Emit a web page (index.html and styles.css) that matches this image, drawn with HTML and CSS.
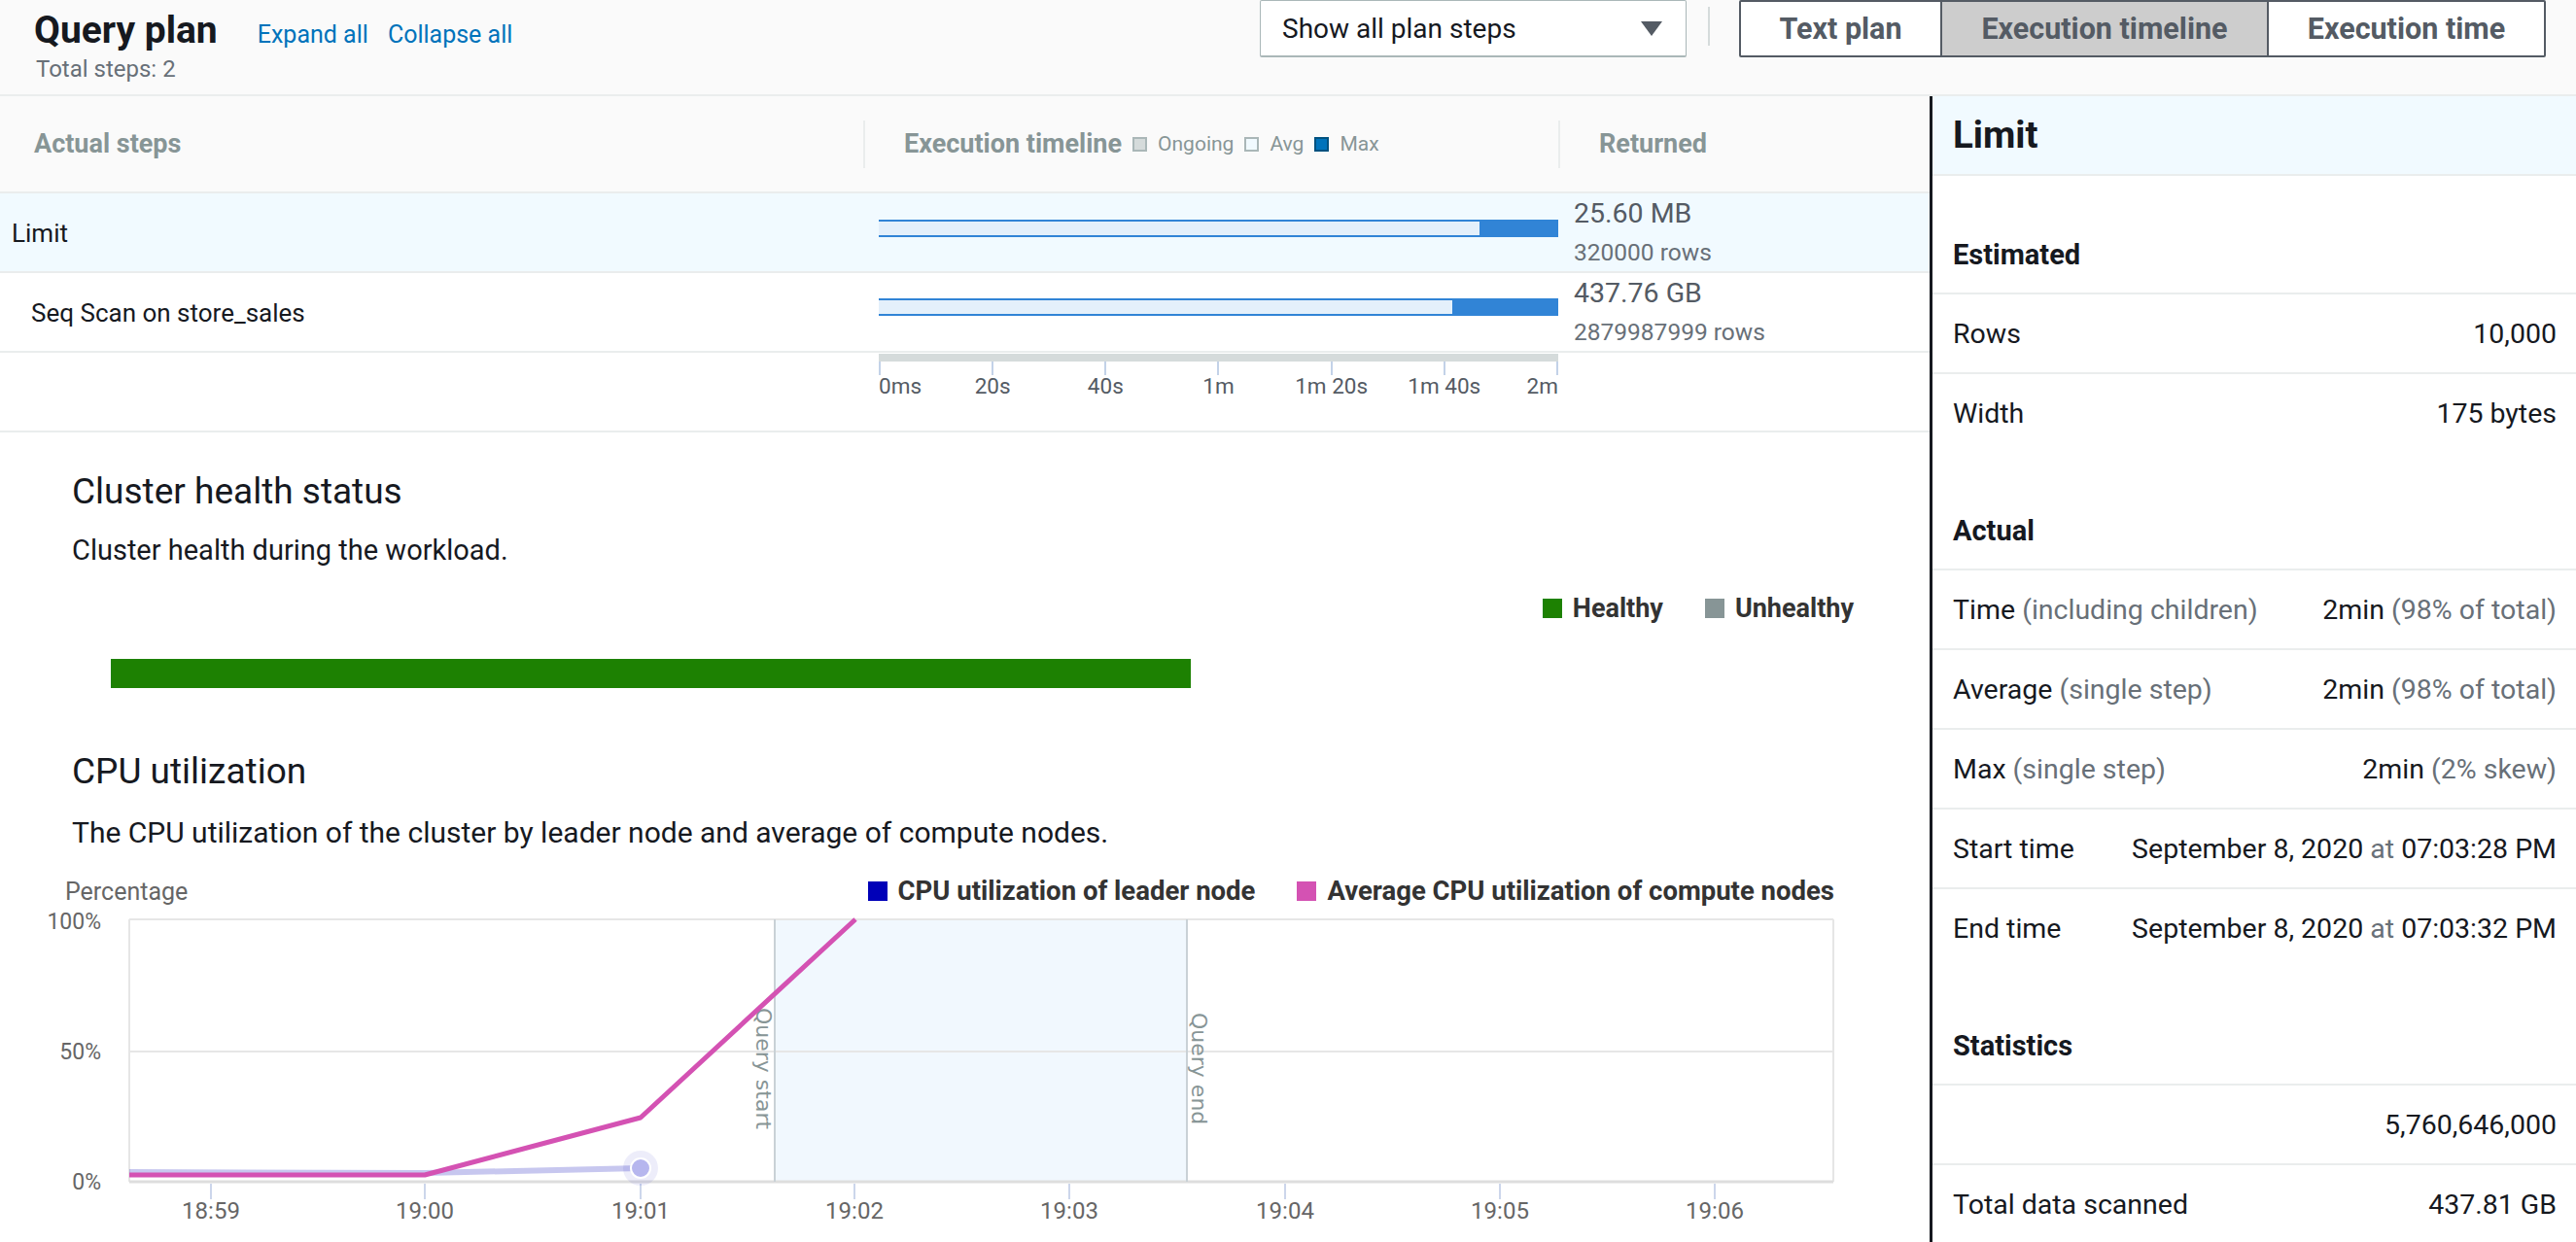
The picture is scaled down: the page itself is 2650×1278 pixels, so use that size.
FILE: index.html
```html
<!DOCTYPE html>
<html lang="en">
<head>
<meta charset="utf-8">
<title>Query plan</title>
<link rel="stylesheet" href="styles.css">
</head>
<body>
<div class="app">
  <header class="topbar">
    <div class="title-block">
      <div class="title-row">
        <h2 class="title">Query plan</h2>
        <a class="link link-first">Expand all</a>
        <a class="link">Collapse all</a>
      </div>
      <div class="subtitle">Total steps: 2</div>
    </div>
    <div class="controls">
      <div class="select"><span>Show all plan steps</span><span class="caret"></span></div>
      <div class="vdiv"></div>
      <div class="seg">
        <button class="seg-btn seg-1">Text plan</button>
        <button class="seg-btn seg-2 active">Execution timeline</button>
        <button class="seg-btn seg-3">Execution time</button>
      </div>
    </div>
  </header>

  <div class="main">
    <section class="left">
      <div class="plan">
        <div class="prow phead">
          <div class="c1 hc1">Actual steps</div>
          <div class="c2 hc"><span class="hsep"></span><span class="htitle">Execution timeline</span>
            <span class="lg lg-ongoing"></span><span class="lgt">Ongoing</span>
            <span class="lg lg-avg"></span><span class="lgt">Avg</span>
            <span class="lg lg-max"></span><span class="lgt">Max</span>
          </div>
          <div class="c3 hc"><span class="hsep"></span><span class="htitle">Returned</span></div>
        </div>

        <div class="prow sel">
          <div class="c1 step">Limit</div>
          <div class="c2 tl"><div class="bar"><div class="bar-max" style="width:81px"></div></div></div>
          <div class="c3 ret"><div class="ret-main">25.60 MB</div><div class="ret-sub">320000 rows</div></div>
        </div>

        <div class="prow">
          <div class="c1 step indent">Seq Scan on store_sales</div>
          <div class="c2 tl"><div class="bar bar2"><div class="bar-max" style="width:109px"></div></div></div>
          <div class="c3 ret"><div class="ret-main">437.76 GB</div><div class="ret-sub">2879987999 rows</div></div>
        </div>

        <div class="prow axis-row">
          <div class="c1"></div>
          <div class="c2 axis">
            <div class="track"></div>
            <div class="ticks">
              <div class="tick first"><i></i><span>0ms</span></div>
              <div class="tick"><i></i><span>20s</span></div>
              <div class="tick"><i></i><span>40s</span></div>
              <div class="tick"><i></i><span>1m</span></div>
              <div class="tick"><i></i><span>1m 20s</span></div>
              <div class="tick"><i></i><span>1m 40s</span></div>
              <div class="tick last"><i></i><span>2m</span></div>
            </div>
          </div>
          <div class="c3"></div>
        </div>
      </div>

      <div class="health">
        <h3 class="sec-title">Cluster health status</h3>
        <p class="sec-desc">Cluster health during the workload.</p>
        <div class="legend health-legend">
          <div class="lg-item"><span class="sq sq-green"></span>Healthy</div>
          <div class="lg-item"><span class="sq sq-gray"></span>Unhealthy</div>
        </div>
        <div class="health-bar"></div>
      </div>

      <div class="cpu">
        <h3 class="sec-title cpu-title">CPU utilization</h3>
        <p class="sec-desc cpu-desc">The CPU utilization of the cluster by leader node and average of compute nodes.</p>
        <div class="chart">
          <div class="chart-top">
            <span class="axis-title">Percentage</span>
            <div class="legend">
              <div class="lg-item"><span class="sq sq-leader"></span>CPU utilization of leader node</div>
              <div class="lg-item"><span class="sq sq-pink"></span>Average CPU utilization of compute nodes</div>
            </div>
          </div>
          <svg class="cpu-svg" width="1986" height="346" viewBox="0 932 1986 346" xmlns="http://www.w3.org/2000/svg">
            <rect class="q-band" x="797" y="946" width="424" height="270"/>
            <g class="grid">
              <line x1="133" y1="946" x2="1886" y2="946"/>
              <line x1="133" y1="1082" x2="1886" y2="1082"/>
              <line x1="1886" y1="946" x2="1886" y2="1216"/>
              <line x1="133" y1="946" x2="133" y2="1216"/>
            </g>
            <line class="xaxis" x1="133" y1="1216" x2="1886" y2="1216"/>
            <g class="plotline">
              <line x1="797" y1="946" x2="797" y2="1216"/>
              <line x1="1221" y1="946" x2="1221" y2="1216"/>
            </g>
            <g class="xticks">
              <line x1="217" y1="1218" x2="217" y2="1234"/>
              <line x1="437" y1="1218" x2="437" y2="1234"/>
              <line x1="659" y1="1218" x2="659" y2="1234"/>
              <line x1="879" y1="1218" x2="879" y2="1234"/>
              <line x1="1100" y1="1218" x2="1100" y2="1234"/>
              <line x1="1322" y1="1218" x2="1322" y2="1234"/>
              <line x1="1543" y1="1218" x2="1543" y2="1234"/>
              <line x1="1764" y1="1218" x2="1764" y2="1234"/>
            </g>
            <g class="xlabels">
              <text x="217" y="1254">18:59</text>
              <text x="437" y="1254">19:00</text>
              <text x="659" y="1254">19:01</text>
              <text x="879" y="1254">19:02</text>
              <text x="1100" y="1254">19:03</text>
              <text x="1322" y="1254">19:04</text>
              <text x="1543" y="1254">19:05</text>
              <text x="1764" y="1254">19:06</text>
            </g>
            <g class="ylabels">
              <text x="104" y="956">100%</text>
              <text x="104" y="1090">50%</text>
              <text x="104" y="1224">0%</text>
            </g>
            <g class="pl-label">
              <text transform="translate(778,1037) rotate(90)">Query start</text>
              <text transform="translate(1226,1042) rotate(90)">Query end</text>
            </g>
            <polyline class="s-leader" points="133,1206 437,1207 659,1202"/>
            <polyline class="s-pink" points="133,1209 437,1209 659,1150 880,946"/>
            <circle class="halo" cx="659" cy="1202" r="18"/>
            <circle class="marker" cx="659" cy="1202" r="10"/>
          </svg>
        </div>
      </div>
    </section>

    <aside class="side">
      <div class="side-head">Limit</div>

      <div class="sec-head">Estimated</div>
      <div class="kv"><span>Rows</span><span>10,000</span></div>
      <div class="kv"><span>Width</span><span>175 bytes</span></div>

      <div class="sec-head">Actual</div>
      <div class="kv"><span>Time <em>(including children)</em></span><span>2min <em>(98% of total)</em></span></div>
      <div class="kv"><span>Average <em>(single step)</em></span><span>2min <em>(98% of total)</em></span></div>
      <div class="kv"><span>Max <em>(single step)</em></span><span>2min <em>(2% skew)</em></span></div>
      <div class="kv"><span>Start time</span><span>September 8, 2020 <em>at</em> 07:03:28 PM</span></div>
      <div class="kv"><span>End time</span><span>September 8, 2020 <em>at</em> 07:03:32 PM</span></div>

      <div class="sec-head">Statistics</div>
      <div class="kv"><span></span><span>5,760,646,000</span></div>
      <div class="kv"><span>Total data scanned</span><span>437.81 GB</span></div>
    </aside>
  </div>
</div>
</body>
</html>
```

FILE: styles.css
```css
* { box-sizing: border-box; }
html, body { margin: 0; padding: 0; }
body {
  width: 2650px;
  height: 1278px;
  overflow: hidden;
  background: #ffffff;
  color: #16191f;
  font-family: Roboto, "Open Sans", "Liberation Sans", sans-serif;
}

/* ---------- top bar ---------- */
.topbar {
  height: 99px;
  background: #fafafa;
  border-bottom: 2px solid #eaeded;
  display: flex;
  justify-content: space-between;
  padding: 0 31px 0 35px;
}
.title-block { padding-top: 9px; }
.title-row { display: flex; align-items: baseline; height: 44px; }
.title {
  margin: 0;
  font-size: 39px;
  font-weight: 700;
  line-height: 44px;
  color: #16191f;
}
.link {
  color: #0073bb;
  font-size: 25px;
  margin-left: 20px;
  cursor: pointer;
}
.link-first { margin-left: 41px; }
.subtitle {
  margin-top: 4px;
  padding-left: 2px;
  font-size: 24px;
  line-height: 28px;
  color: #687078;
}

.controls { display: flex; align-items: flex-start; }
.select {
  width: 439px;
  height: 59px;
  background: #fff;
  border: 1px solid #aab7b8;
  border-bottom-width: 2px;
  border-radius: 2px;
  display: flex;
  align-items: center;
  justify-content: space-between;
  padding: 0 24px 0 22px;
  font-size: 28px;
  color: #16191f;
}
.caret {
  width: 0;
  height: 0;
  border-left: 11px solid transparent;
  border-right: 11px solid transparent;
  border-top: 15px solid #545b64;
}
.vdiv {
  width: 2px;
  height: 40px;
  margin: 7px 30px 0 22px;
  background: #d5dbdb;
}
.seg {
  display: flex;
  height: 59px;
  border: 2px solid #545b64;
  border-radius: 2px;
}
.seg-btn {
  height: 100%;
  border: 0;
  padding: 0;
  margin: 0;
  background: #ffffff;
  color: #545b64;
  font-family: Roboto, "Open Sans", sans-serif;
  font-weight: 700;
  font-size: 30.5px;
}
.seg-1 { width: 205px; }
.seg-2 { width: 336px; border-left: 2px solid #545b64; }
.seg-3 { width: 285px; border-left: 2px solid #545b64; }
.seg-btn.active { background: #cdcdcd; }

/* ---------- main ---------- */
.main { display: flex; height: 1179px; }
.left { width: 1985px; flex: none; }
.side {
  width: 665px;
  flex: none;
  border-left: 3px solid #16191f;
}

/* ---------- plan table ---------- */
.prow {
  display: grid;
  grid-template-columns: 889px 715px 1fr;
  height: 82px;
  border-bottom: 2px solid #eaeded;
}
.prow.sel { background: #f1faff; }
.phead {
  height: 100px;
  background: #fafafa;
  color: #879596;
  font-weight: 700;
  font-size: 27px;
}
.c1 { display: flex; align-items: center; }
.hc1 { padding-left: 35px; }
.hc { display: flex; align-items: center; margin-left: -1px; }
.hsep {
  width: 2px;
  height: 49px;
  background: #eaeded;
  margin-right: 40px;
}
.lg {
  width: 15px;
  height: 15px;
  border: 2px solid #aab7b8;
  margin: 0 11px 0 11px;
}
.lg-ongoing { background: #d5dbdb; }
.lg-avg { background: #f1faff; }
.lg-max { background: #0073bb; border-color: #00517f; }
.lgt {
  font-size: 21px;
  font-weight: 400;
  color: #879596;
}

.step { font-size: 26px; padding-left: 12px; color: #16191f; }
.step.indent { padding-left: 32px; }

.tl { padding: 0 1px 0 15px; }
.bar {
  margin-top: 27px;
  height: 18px;
  border-top: 2px solid #3184d6;
  border-bottom: 2px solid #3184d6;
  background: #e4f0fb;
  display: flex;
  justify-content: flex-end;
}
.bar2 { margin-top: 26px; }
.bar-max { height: 100%; background: #3184d6; }

.ret { padding: 1px 0 0 15px; }
.ret-main { font-size: 28.5px; line-height: 40px; color: #545b64; }
.ret-sub { font-size: 24.5px; line-height: 40px; color: #687078; }

.axis { padding: 1px 1px 0 15px; }
.track { height: 8px; background: #d5dbdb; }
.ticks { display: flex; justify-content: space-between; }
.tick {
  width: 2px;
  display: flex;
  flex-direction: column;
  align-items: center;
}
.tick.first { align-items: flex-start; }
.tick.last { align-items: flex-end; }
.tick i { display: block; width: 2px; height: 14px; background: #c3d2e8; }
.tick span {
  white-space: nowrap;
  font-size: 22.5px;
  line-height: 22px;
  color: #545b64;
}

/* ---------- sections ---------- */
.health { padding: 39px 78px 0 74px; }
.sec-title {
  margin: 0;
  font-size: 37px;
  font-weight: 400;
  line-height: 44px;
  color: #16191f;
}
.sec-desc {
  margin: 20px 0 0;
  font-size: 29px;
  line-height: 36px;
  color: #16191f;
}
.legend { display: flex; gap: 43px; }
.health-legend { justify-content: flex-end; margin-top: 24px; }
.lg-item {
  display: flex;
  align-items: center;
  font-size: 27px;
  font-weight: 700;
  line-height: 36px;
  color: #333333;
}
.sq { width: 20px; height: 20px; margin-right: 11px; }
.sq-green { background: #1d8102; }
.sq-gray { background: #879596; }
.sq-leader { background: #0000b8; }
.sq-pink { background: #d452b3; }
.health-bar {
  margin: 34px 0 0 40px;
  width: 1111px;
  height: 30px;
  background: #1d8102;
}

.cpu { padding-left: 74px; }
.cpu-title { margin-top: 64px; }
.cpu-desc { margin-top: 23px; font-size: 30px; }
.chart { margin: 27px 0 0 -74px; width: 1986px; }
.chart-top {
  display: flex;
  justify-content: space-between;
  align-items: center;
  height: 30px;
  padding: 0 99px 0 67px;
}
.chart-top .lg-item { font-size: 27.5px; }
.axis-title { font-size: 25px; color: #666666; }
.cpu-svg { display: block; }
.q-band { fill: #f1f8fe; }
.grid line { stroke: #e6e6e6; stroke-width: 2; }
.xaxis { stroke: #dedede; stroke-width: 3; }
.plotline line { stroke: #c9d1d6; stroke-width: 2; }
.xticks line { stroke: #ccd6eb; stroke-width: 2; }
.xlabels text {
  font-family: Roboto, sans-serif;
  font-size: 24px;
  fill: #666666;
  text-anchor: middle;
}
.ylabels text {
  font-family: Roboto, sans-serif;
  font-size: 23px;
  fill: #666666;
  text-anchor: end;
}
.pl-label text {
  font-family: "DejaVu Sans", sans-serif;
  font-size: 22px;
  fill: #879596;
}
.s-leader {
  fill: none;
  stroke: rgba(0, 0, 184, 0.22);
  stroke-width: 6;
  stroke-linejoin: round;
}
.s-pink {
  fill: none;
  stroke: #d452b3;
  stroke-width: 5;
  stroke-linejoin: round;
}
.halo { fill: rgba(0, 0, 184, 0.07); }
.marker { fill: #b6b6ee; stroke: #ffffff; stroke-width: 2; }

/* ---------- side panel ---------- */
.side-head {
  height: 82px;
  background: #f1faff;
  border-bottom: 2px solid #eaeded;
  padding-left: 21px;
  font-size: 38.5px;
  font-weight: 700;
  line-height: 80px;
}
.sec-head {
  height: 120px;
  display: flex;
  align-items: flex-end;
  padding: 0 21px 21px;
  font-size: 29px;
  font-weight: 700;
  line-height: 36px;
}
.kv {
  height: 82px;
  border-top: 2px solid #eaeded;
  display: flex;
  align-items: center;
  justify-content: space-between;
  padding: 0 20px 0 21px;
  font-size: 28.5px;
  color: #16191f;
}
.kv em { font-style: normal; color: #687078; }
```
